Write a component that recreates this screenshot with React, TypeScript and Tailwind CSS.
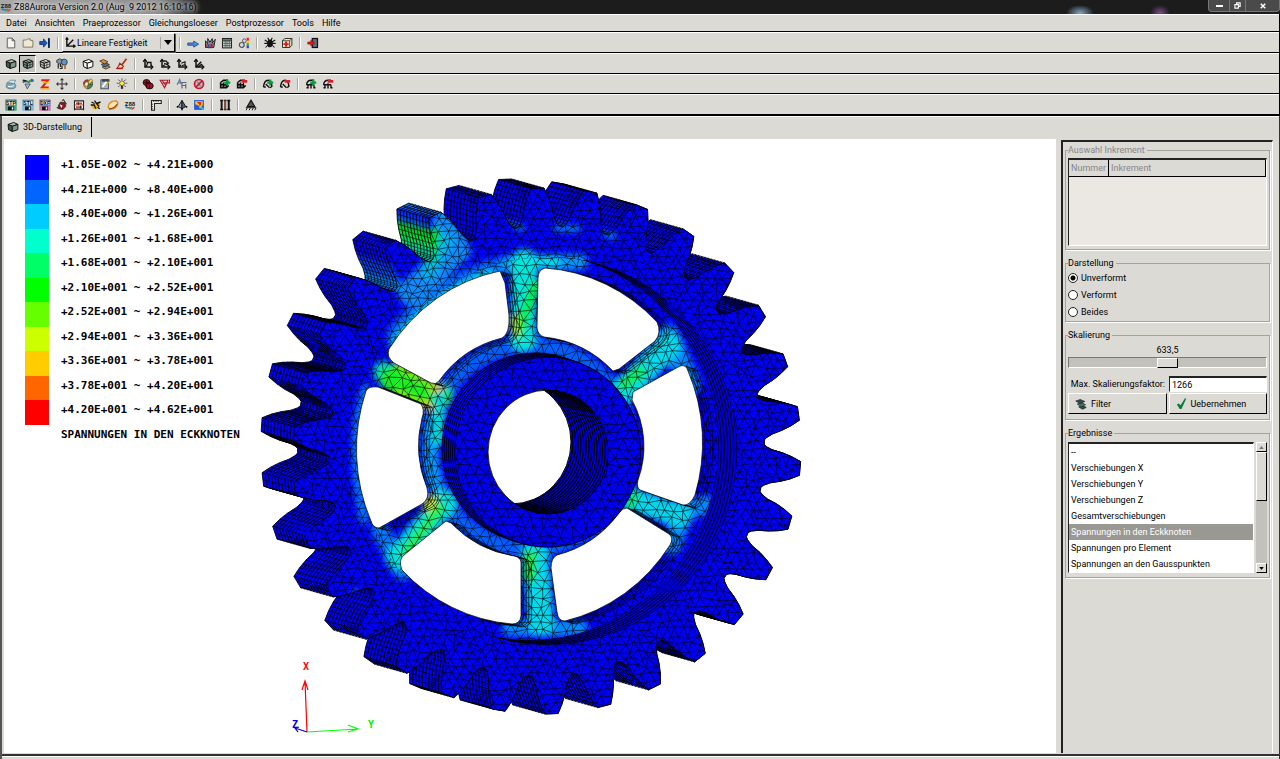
import React, { useState } from 'react';

const RESULTS = [
  '--',
  'Verschiebungen X',
  'Verschiebungen Y',
  'Verschiebungen Z',
  'Gesamtverschiebungen',
  'Spannungen in den Eckknoten',
  'Spannungen pro Element',
  'Spannungen an den Gausspunkten',
];

const LEGEND = [
  { color: '#0000ff', range: '+1.05E-002 ~ +4.21E+000' },
  { color: '#0066ff', range: '+4.21E+000 ~ +8.40E+000' },
  { color: '#00ccff', range: '+8.40E+000 ~ +1.26E+001' },
  { color: '#00ffcc', range: '+1.26E+001 ~ +1.68E+001' },
  { color: '#00ff66', range: '+1.68E+001 ~ +2.10E+001' },
  { color: '#00ff00', range: '+2.10E+001 ~ +2.52E+001' },
  { color: '#66ff00', range: '+2.52E+001 ~ +2.94E+001' },
  { color: '#ccff00', range: '+2.94E+001 ~ +3.36E+001' },
  { color: '#ffcc00', range: '+3.36E+001 ~ +3.78E+001' },
  { color: '#ff6600', range: '+3.78E+001 ~ +4.20E+001' },
  { color: '#ff0000', range: '+4.20E+001 ~ +4.62E+001' },
];

/* ---------- gear geometry ---------- */

const CX = 547;
const CY = 451;
const TEETH = 30;
const PROFILE: [number, number][] = [
  [-5.4, 0.856],
  [-4.8, 0.866],
  [-4, 0.89],
  [-3.3, 0.93],
  [-2.5, 0.965],
  [-1.5, 1],
  [1.5, 1],
  [2.5, 0.965],
  [3.3, 0.93],
  [4, 0.89],
  [4.8, 0.866],
  [5.4, 0.856],
];

const gearPoints: [number, number][] = [];
for (let i = 0; i < TEETH; i++) {
  for (const [offset, r] of PROFILE) {
    const a = ((3.8 + i * 12 + offset) * Math.PI) / 180;
    const dy = Math.sin(a) * 263 * r;
    // the lower half leans slightly to the left
    const lean = dy > 0 ? dy * 0.02 : 0;
    gearPoints.push([CX + Math.cos(a) * 254 * r - lean, CY + dy]);
  }
}

const GEAR_PATH = 'M' + gearPoints.map(([x, y]) => `${x.toFixed(1)} ${y.toFixed(1)}`).join('L') + 'Z';

// lines that run through the width of the teeth
const RIB_PATH = gearPoints
  .map(([x, y], i) => {
    const [nx, ny] = gearPoints[(i + 1) % gearPoints.length];
    const mx = (x + nx) / 2;
    const my = (y + ny) / 2;
    return `M${x.toFixed(1)} ${y.toFixed(1)}l-32 -9M${mx.toFixed(1)} ${my.toFixed(1)}l-32 -9`;
  })
  .join('');

const noise = (i: number, j: number) => {
  const v = Math.sin(i * 127.1 + j * 311.7) * 43758.5453;
  return v - Math.floor(v) - 0.5;
};

const buildMesh = (x0: number, y0: number, x1: number, y1: number, size: number) => {
  const rowHeight = size * 0.87;
  const point = (i: number, j: number) => {
    const x = x0 + i * size + (j % 2 ? size / 2 : 0) + noise(i, j) * size * 0.55;
    const y = y0 + j * rowHeight + noise(j + 57, i + 13) * size * 0.5;
    return `${x.toFixed(1)} ${y.toFixed(1)}`;
  };
  let d = '';
  const cols = Math.ceil((x1 - x0) / size);
  const rows = Math.ceil((y1 - y0) / rowHeight);
  for (let j = 0; j < rows; j++) {
    for (let i = 0; i < cols; i++) {
      const shift = j % 2 ? 1 : 0;
      d += `M${point(i + 1, j)}L${point(i, j)}L${point(i + shift, j + 1)}`;
      d += `M${point(i, j)}L${point(i + shift - 1, j + 1)}`;
    }
  }
  return d;
};

const RIM_MESH = buildMesh(280, 180, 810, 720, 8.6);
const WEB_MESH = buildMesh(340, 240, 740, 650, 10);

const WINDOWS = [
  'M500 271L505 283L509 315Q510 334 502 338Q462 348 439 381Q436 385 431 383L394 363Q386 357 389 349A172 178 0 0 1 500 271Z',
  'M545 268Q538 270 538 278L537 328Q538 335 544 337A111 111 0 0 1 613 371L619 369L655 341Q662 333 657 322A172 178 0 0 0 545 268Z',
  'M633 392L680 366Q686 364 688 371A172 178 0 0 1 695 495Q690 506 683 505L640 490Q636 487 638 480A93 95 0 0 0 632 400Z',
  'M627 508L669 534Q674 538 670 545A172 178 0 0 1 565 621Q558 621 557 612L551 568Q551 558 557 555A111 111 0 0 0 619 513Q622 508 627 508Z',
  'M446 521L404 555Q398 560 402 570A172 178 0 0 0 512 624Q520 624 521 616L521 562Q520 557 514 556A111 111 0 0 1 451 523Z',
  'M366 391Q368 386 378 387L421 404Q425 410 422 418A111 111 0 0 0 427 488Q430 499 422 504L379 528Q373 528 371 521A172 178 0 0 1 366 391Z',
];

const steps = (n: number) => Array.from({ length: n }, (_, i) => i);

const StressField: React.FC = () => (
  <g>
    <rect x="200" y="100" width="700" height="700" fill="#0000f6" />
    <g filter="url(#soft)" fill="none" strokeLinecap="round">
      {/* rim next to the loaded tooth */}
      <path d="M400 335Q432 295 492 272" stroke="#0066ff" strokeWidth="26" />
      <path d="M446 222L456 250L412 292" stroke="#0a8cff" strokeWidth="28" />
      <path d="M394 345Q428 298 490 274" stroke="#00d8e8" strokeWidth="9" />
      <path d="M446 240L428 272" stroke="#00bbee" strokeWidth="14" />
      <path d="M434 233L430 256" stroke="#00e010" strokeWidth="12" />
      <path d="M386 268L398 288" stroke="#00a0ee" strokeWidth="8" />
      <path d="M355 592L362 600M556 228L578 229M606 234L614 236M516 226L522 228" stroke="#0090f0" strokeWidth="6" />
      {/* left edge of the rim */}
      <path d="M366 388Q348 440 364 520" stroke="#0080ff" strokeWidth="9" />
      {/* ring around the hub */}
      <ellipse cx="529" cy="447" rx="100" ry="102" stroke="#0060ff" strokeWidth="18" />
      <path d="M436 390Q424 445 438 500" stroke="#00a0ff" strokeWidth="14" />
      {/* spokes */}
      <path d="M505 264L580 262" stroke="#0098ff" strokeWidth="16" />
      <path d="M524 262L523 338" stroke="#00e6dd" strokeWidth="26" />
      <path d="M525 258L556 262" stroke="#00e8ee" strokeWidth="9" />
      <path d="M536 285L518 332" stroke="#00f050" strokeWidth="11" />
      <path d="M514 318L516 332" stroke="#b0f000" strokeWidth="8" />
      <path d="M668 335L690 385" stroke="#0088ff" strokeWidth="22" />
      <path d="M668 345L625 390" stroke="#00dcf0" strokeWidth="27" />
      <path d="M640 372L624 384" stroke="#10f060" strokeWidth="13" />
      <path d="M684 508L672 545M684 510L705 505" stroke="#0088ff" strokeWidth="20" />
      <path d="M680 516L634 500" stroke="#00d8f0" strokeWidth="24" />
      <path d="M634 494L629 506" stroke="#00ee70" strokeWidth="10" />
      <path d="M510 628L580 628" stroke="#0088ff" strokeWidth="17" />
      <path d="M535 555L541 622" stroke="#00dcee" strokeWidth="27" />
      <path d="M530 556L529 576" stroke="#20ee30" strokeWidth="13" />
      <path d="M380 530L403 572" stroke="#0078ff" strokeWidth="18" />
      <path d="M398 558L445 502" stroke="#00e2e0" strokeWidth="25" />
      <path d="M440 508L406 552" stroke="#20f040" strokeWidth="10" />
      <path d="M432 500L428 506" stroke="#d0f000" strokeWidth="11" />
      <path d="M384 372L394 380" stroke="#00e0c0" strokeWidth="22" />
      <path d="M392 379L440 396" stroke="#18f020" strokeWidth="25" />
      <path d="M440 388L438 440" stroke="#00d8d8" strokeWidth="13" />
      <path d="M398 364L436 386M396 394L426 406" stroke="#88f000" strokeWidth="7" />
      <path d="M434 390L440 388M426 404L430 408" stroke="#f0b000" strokeWidth="6" />
    </g>
  </g>
);

const GearModel: React.FC = () => (
  <svg
    className="absolute inset-0 h-full w-full"
    viewBox="4 139 1052 614"
    preserveAspectRatio="xMinYMin meet"
    role="img"
    aria-label="Zahnrad"
  >
    <defs>
      <filter id="soft" x="-10%" y="-10%" width="120%" height="120%">
        <feGaussianBlur stdDeviation="3" />
      </filter>
      <pattern id="stress" patternUnits="userSpaceOnUse" x="200" y="100" width="700" height="700" viewBox="200 100 700 700">
        <StressField />
      </pattern>
      <clipPath id="gear"><path d={GEAR_PATH} /></clipPath>
      <clipPath id="recess"><ellipse cx="548" cy="451" rx="189" ry="194" /></clipPath>
      <clipPath id="web"><ellipse cx="529" cy="446" rx="189" ry="194" /></clipPath>
      <clipPath id="hub"><ellipse cx="548" cy="452" rx="93" ry="95" /></clipPath>
      <clipPath id="bore"><ellipse cx="548" cy="452" rx="60" ry="62" /></clipPath>
    </defs>

    {steps(11).map(k => (
      <path
        key={k}
        d={GEAR_PATH}
        transform={`translate(${-32 + k * 3.2} ${-9 + k * 0.9})`}
        fill="url(#stress)"
        stroke="#000"
        strokeWidth="0.9"
      />
    ))}
    <path d={RIB_PATH} stroke="#000" strokeWidth="0.6" />
    <path d={GEAR_PATH} fill="url(#stress)" stroke="#000" strokeWidth="0.8" />
    <g clipPath="url(#gear)">
      <path d={RIM_MESH} fill="none" stroke="#000" strokeWidth="0.6" />
    </g>

    <g clipPath="url(#recess)">
      <ellipse cx="548" cy="451" rx="189" ry="194" fill="#0000d0" />
      {steps(7).map(k => (
        <ellipse key={k} cx={548 - k * 3.1} cy={451 - k * 0.8} rx="189" ry="194" fill="none" stroke="#000" strokeWidth="0.9" />
      ))}
      <g clipPath="url(#web)">
        <rect x="330" y="240" width="420" height="420" fill="url(#stress)" />
        <path d={WEB_MESH} fill="none" stroke="#000" strokeWidth="0.6" />
      </g>
    </g>

    <g fill="none" stroke="#000" strokeWidth="0.7">
      {WINDOWS.map(d =>
        steps(4).map(k => <path key={d + k} d={d} transform={`translate(${(k + 1) * 2.6} ${(k + 1) * 0.7})`} />)
      )}
    </g>
    {WINDOWS.map(d => (
      <path key={d} d={d} fill="#fff" stroke="#000" strokeWidth="0.7" />
    ))}

    {steps(7).map(k => (
      <ellipse key={k} cx={535 + k * 2.1} cy={448 + k * 0.7} rx="93" ry="95" fill="#0000f0" stroke="#000" strokeWidth="0.9" />
    ))}
    <g clipPath="url(#hub)">
      <path d={WEB_MESH} fill="none" stroke="#000" strokeWidth="0.6" />
    </g>
    <g clipPath="url(#bore)">
      <rect x="480" y="380" width="140" height="140" fill="#0000cc" />
      {steps(14).map(k => (
        <ellipse key={k} cx={548 - k * 2.7} cy={452 - k * 0.75} rx="60" ry="62" fill="none" stroke="#000" strokeWidth="1.1" />
      ))}
      <ellipse cx="511" cy="442" rx="60" ry="62" fill="#fff" stroke="#000" />
    </g>
    <ellipse cx="548" cy="452" rx="60" ry="62" fill="none" stroke="#000" strokeWidth="0.8" />

    {/* coordinate axes */}
    <g fill="none" strokeWidth="1.2">
      <path d="M307 732L305 681M302 690L305 681L308 690" stroke="#f00" />
      <path d="M307 732L358 729M348 725L358 729L348 732" stroke="#0f0" />
      <path d="M307 732L295 728M299 727L295 728L298 732" stroke="#00d" />
    </g>
    <g className="font-['DejaVu_Sans_Mono',monospace] text-[10px] font-bold">
      <text x="303" y="670" fill="#f00">X</text>
      <text x="368" y="728" fill="#0e0">Y</text>
      <text x="292" y="728" fill="#00d">Z</text>
    </g>
  </svg>
);

/* ---------- icons, all on a 16 unit grid ---------- */

const Cube: React.FC<{ top: string; left: string; right: string; mesh?: boolean }> = ({ top, left, right, mesh }) => (
  <g stroke="#111" strokeWidth="1.3" strokeLinejoin="round">
    <path d="M1.5 4.5L9 2L14.5 4.5L7 7Z" fill={top} />
    <path d="M1.5 4.5L7 7V14L2 11.5Z" fill={left} />
    <path d="M7 7L14.5 4.5V11.5L7 14Z" fill={right} />
    {mesh && <path d="M2 8L7 10.5L14 8M10.5 5.5V13M5 3.500L11 6" strokeWidth="0.8" fill="none" />}
  </g>
);

const Axes: React.FC<{ variant: number }> = ({ variant }) => (
  <g fill="none" stroke="#111" strokeWidth="2">
    <path d="M4 2V12H14" />
    <path d="M1.5 5L4 2L6.5 5M11.5 9L14.5 12L11.5 15" strokeWidth="1.6" />
    {variant === 0 && <path d="M7 9V6H12V10M4 12L7 9" strokeWidth="1.7" />}
    {variant === 1 && <path d="M6 4Q12 3 11 9M7 7L11 9L13 6M5 11L8 9" strokeWidth="1.7" />}
    {variant === 2 && <path d="M7 7L12 5V9L8 10M5 11L7 9" strokeWidth="1.5" />}
    {variant === 3 && <path d="M4 12L11 5M7 12L12 8" />}
  </g>
);

const FileBadge: React.FC<{ label: string; color: string }> = ({ label, color }) => (
  <g>
    <rect x="1" y="1" width="14" height="14" fill={color} stroke={color} />
    <rect x="1.500" y="2" width="13" height="7" fill="#e8f2ee" stroke="#234" strokeWidth="0.600" />
    <rect x="4" y="10" width="8" height="5" fill="#111" />
    <rect x="9" y="11" width="2" height="3" fill="#fff" />
    <text x="8" y="8" fontSize="7" fontWeight="bold" textAnchor="middle" fill="#012">{label}</text>
  </g>
);

const Nodes: React.FC<{ sign: '+' | '-'; kind: number }> = ({ sign, kind }) => (
  <g fill="none" stroke="#111" strokeWidth="1.8">
    {kind === 0 && <path d="M2 6L6 3H12M2 6V13H10L13 10M2 9H10M6 6V13M10 6V13" fill="#777" />}
    {kind === 1 && <path d="M2 12Q3 3 8 3T13 12M2 12H5M5 8L10 13M11 13L14 10" />}
    {kind === 2 && <path d="M2 9Q3 3 8 3H12M2 9H12M4 9V14M8 7V14M12 9V14M2 13H5M7 13H9M11 13H14" />}
    {sign === '+'
      ? <path d="M11 2V10M7 6H15" stroke="#0a9a3c" strokeWidth="3" />
      : <path d="M7.5 4.5H15" stroke="#d8202a" strokeWidth="3.6" />}
  </g>
);

const LayersIcon: React.FC<{ a: string; b: string }> = ({ a, b }) => (
  <g stroke="#222" strokeWidth="0.9">
    <path d="M5 12L10 10L15 12.5L10 15Z" fill={b} />
    <path d="M3 8L9 6L14 9L8 12Z" fill={a} />
    <path d="M1 4L7 2L13 4.5L7 7.5Z" fill={b} />
  </g>
);

const ICONS: Record<string, React.ReactNode> = {
  'Neu': <path d="M3 1.5H9.5L13 5V14.5H3ZM9.5 1.5V5H13" fill="#f6f4ec" stroke="#555" strokeWidth="1.2" />,
  'Oeffnen': <path d="M1.5 13.5V4H6L7.5 2.5H11V4.5H14.5V13.5Z" fill="#efe9d2" stroke="#777260" strokeWidth="1.2" />,
  'Import': (
    <g>
      <path d="M1 6H6V2.5L11 8L6 13.5V10H1Z" fill="#1b55b8" stroke="#0b2a6b" />
      <rect x="12" y="1.5" width="2.5" height="13" fill="#0b1f5a" />
    </g>
  ),
  'Rechnen': <path d="M1 8H9V5.5L15.5 9.5L9 13.5V11H1Z" fill="#4f8fd8" stroke="#163a78" />,
  'Vernetzung': (
    <g>
      <path d="M2 14V5L5 9V2L8 7L11 2V8L15 3L13 14Z" fill="#8d98ac" stroke="#222" strokeWidth="1.3" />
      <path d="M4 14V9M8 15V9M12 14V8" stroke="#b22" strokeWidth="1.6" />
      <path d="M6 15V10M10 15V9" stroke="#24a" strokeWidth="1.6" />
    </g>
  ),
  'Tabelle': (
    <g>
      <rect x="2" y="2" width="12" height="12.5" fill="#d9e4dc" stroke="#222" strokeWidth="1.4" />
      <path d="M2 4.5H14" stroke="#455" strokeWidth="3" />
      <path d="M2 8.5H14M2 11.5H14M5.5 5V14M8 5V14M11 5V14" stroke="#444" />
    </g>
  ),
  'Darstellung': (
    <g>
      <circle cx="5" cy="10.5" r="3.2" fill="#ddd" stroke="#555" strokeWidth="1.6" />
      <circle cx="8.5" cy="5" r="2.5" fill="#cde" stroke="#557" strokeWidth="1.3" />
      <path d="M13 1V5" stroke="#e22" strokeWidth="3" />
      <path d="M13 5V8" stroke="#fc0" strokeWidth="3" />
      <path d="M13 8V11" stroke="#2b4" strokeWidth="3" />
      <path d="M13 11V15" stroke="#24e" strokeWidth="3" />
    </g>
  ),
  'Spider': (
    <g stroke="#111" strokeWidth="1.4" fill="#111">
      <ellipse cx="8" cy="8.5" rx="3" ry="4.5" />
      <path d="M1 4L6 7M15 4L10 7M0.5 8.5H15.5M2 14L6 10M14 14L10 10M5 1L7 5M11 1L9 5" fill="none" />
    </g>
  ),
  'Hilfe': (
    <g>
      <path d="M2 5L5 2H14.5V11L11.5 14H2Z" fill="#efe3c0" stroke="#222" strokeWidth="1.2" />
      <path d="M2 5H11.5V14M11.5 5L14.5 2" fill="none" stroke="#222" />
      <path d="M6.7 6V13M3.2 9.5H10.2" stroke="#e01818" strokeWidth="2.6" />
    </g>
  ),
  'Beenden': (
    <g>
      <rect x="7" y="2" width="7" height="12" fill="#667" stroke="#111" strokeWidth="1.6" />
      <path d="M1 6.5H5V4L10 8L5 12V9.5H1Z" fill="#d81818" stroke="#700" strokeWidth="0.6" />
    </g>
  ),
  'Schattiert': <Cube top="#a9bfb7" left="#3f5a52" right="#7d978d" />,
  'Flaechennetz': <Cube top="#9fb5ad" left="#65857a" right="#8fa99f" mesh />,
  'Netz': <Cube top="#f2f2ee" left="#b4b4b0" right="#dcdcd8" mesh />,
  'Volumen': <Cube top="#fff" left="#f2f2f2" right="#fff" />,
  'Randbedingungen': (
    <g stroke="#222">
      <path d="M1 3L5 1L9 3V7L5 8L1 6Z" fill="#8a94a4" />
      <circle cx="11" cy="5.5" r="4" fill="#5f94c8" />
      <path d="M3 8V14M6 8V12M8 10V14H5" strokeWidth="1.6" fill="none" />
      <path d="M12 9V14.5" stroke="#b0703a" strokeWidth="2.4" />
    </g>
  ),
  'Ebenen': (
    <g stroke="#222" strokeWidth="0.9">
      <path d="M4 12L10 9.500L15 12L9 15Z" fill="#e08a2a" />
      <path d="M3 8.500L9 6L14 9L8 12Z" fill="#466f92" />
      <path d="M1 4L6 2L12 5L7 8Z" fill="#e08a2a" />
    </g>
  ),
  'Pinsel': (
    <g>
      <path d="M14 1L8 9" stroke="#b03a20" strokeWidth="2.6" />
      <path d="M5 7L10 11L8 13.500L1 14Q4 11 5 7Z" fill="#eadca6" stroke="#a02010" strokeWidth="1.4" />
      <path d="M1 14H9" stroke="#b01818" strokeWidth="1.8" />
    </g>
  ),
  'Achsen 1': <Axes variant={0} />,
  'Achsen 2': <Axes variant={1} />,
  'Achsen 3': <Axes variant={2} />,
  'Achsen 4': <Axes variant={3} />,
  'Ansicht': (
    <g stroke="#446a74" strokeWidth="0.8">
      <ellipse cx="8" cy="10.5" rx="6.5" ry="4" fill="#7fa9b4" />
      <path d="M2 7Q7 1 14 3L12 8Q7 5 2 7Z" fill="#d3e6ea" />
      <path d="M4 11Q8 13 12 10" fill="none" stroke="#fff" strokeWidth="1.3" />
    </g>
  ),
  'Rotation': (
    <g>
      <path d="M1 6Q5 3 10 6" fill="none" stroke="#3a6f86" strokeWidth="2.6" />
      <path d="M1 3L6 4" stroke="#222" strokeWidth="1.8" />
      <path d="M8 4L13 1V5L9 7Z" fill="#4a9a4a" />
      <path d="M12 1L15.500 2V5L12 5Z" fill="#2c5cc0" />
      <path d="M4 8L11 8L7 14.5Z" fill="#9ac1cc" stroke="#345" />
    </g>
  ),
  'Zoom': (
    <g>
      <path d="M3 3H12L4 12.5H13" fill="none" stroke="#e02020" strokeWidth="2.6" />
      <path d="M3 14.5H14M5 6H13" stroke="#f0b400" strokeWidth="1.8" />
    </g>
  ),
  'Verschieben': (
    <path d="M8 1V15M1 8H15M6 3L8 1L10 3M6 13L8 15L10 13M3 6L1 8L3 10M13 6L15 8L13 10" fill="none" stroke="#333" strokeWidth="1.4" />
  ),
  'Farben': (
    <g stroke="#333" strokeWidth="0.6">
      <circle cx="8" cy="8.500" r="6" fill="#e2a33c" />
      <path d="M2 8Q2 2 8 2.5L8 8Z" fill="#d03a2a" />
      <path d="M8 9L14 8Q13 14 7 14.5Z" fill="#3b8f46" />
      <path d="M4 6L8 5V10L4 11Z" fill="#fff" />
      <path d="M8 7L11 1L14.500 3L11 8Z" fill="#f0dc50" />
      <path d="M10 8L14 5V9Z" fill="#5a8fd0" />
    </g>
  ),
  'Protokoll': (
    <g>
      <rect x="2.5" y="2.5" width="10" height="12" fill="#9db6cc" stroke="#333" />
      <path d="M4 1.5H14V5H4Z" fill="#3b4a54" />
      <path d="M4.500 12L10 5" stroke="#fff" strokeWidth="2.400" />
      <path d="M13.5 5L10 9" stroke="#e0a020" strokeWidth="1.6" />
    </g>
  ),
  'Licht': (
    <g>
      <circle cx="8" cy="7" r="3.2" fill="#ffe94a" stroke="#444" />
      <rect x="6.5" y="10.5" width="3" height="4" fill="#333" />
      <path d="M8 0.5V2.5M1 7H3.5M12.5 7H15M3 2L5 4M13 2L11 4M3 12L5 10M13 12L11 10" stroke="#444" strokeWidth="1.2" />
    </g>
  ),
  'Knoten': (
    <g fill="#9a1024" stroke="#1a0508" strokeWidth="1.2">
      <ellipse cx="6" cy="6" rx="4.5" ry="4" />
      <ellipse cx="10" cy="10.5" rx="5" ry="4" />
      <path d="M3 6H12M6 3V12M10 6V14" fill="none" strokeWidth="0.9" />
    </g>
  ),
  'Elemente': <path d="M1.5 3H12L7.5 13ZM5 6.5H14V2M4 3L9 10" fill="none" stroke="#b0182a" strokeWidth="1.4" />,
  'Beschriftung': (
    <g fill="none" stroke="#5f6670" strokeWidth="1.6">
      <path d="M1.5 9L5 2L7 8M3 6.5H7" stroke="#5a7aa8" />
      <path d="M7 6H14M8 14V6M8 10H12M13 8V14" />
    </g>
  ),
  'Ausblenden': (
    <g fill="none">
      <circle cx="8" cy="8" r="6" fill="#b9b4c0" stroke="#c8182c" strokeWidth="2.2" />
      <path d="M6 5L10 11" stroke="#445" />
      <path d="M4 12L12 4" stroke="#c8182c" strokeWidth="2.2" />
    </g>
  ),
  'Knoten hinzufuegen': <Nodes sign="+" kind={0} />,
  'Knoten entfernen': <Nodes sign="-" kind={0} />,
  'Flaeche hinzufuegen': <Nodes sign="+" kind={1} />,
  'Flaeche entfernen': <Nodes sign="-" kind={1} />,
  'Element hinzufuegen': <Nodes sign="+" kind={2} />,
  'Element entfernen': <Nodes sign="-" kind={2} />,
  'STEP': <FileBadge label="STP" color="#4f9c84" />,
  'STL': <FileBadge label="STL" color="#7fb6dc" />,
  'DXF': <FileBadge label="DXF" color="#c477b4" />,
  'Nastran': (
    <g>
      <path d="M3 9L6 4L12 5L13 10L9 14L4 13Z" fill="#8a1820" stroke="#222" />
      <path d="M5 7L9 9L7 12Z" fill="#fff" />
      <path d="M1 11L4 13M8 2L10 1L14 7" stroke="#333" strokeWidth="1.4" fill="none" />
    </g>
  ),
  'Abaqus': (
    <g fill="none">
      <rect x="1.5" y="2" width="13" height="12" fill="#fff" />
      <path d="M2 1.5V15M14 1.5V15M1.5 2.5H14.5M1.5 13.5H14.5" stroke="#222" strokeWidth="1.5" />
      <path d="M2 8H14" stroke="#555" />
      <path d="M4 6H12M4 11H12" stroke="#e04020" strokeWidth="2.4" />
      <path d="M7 4V8M10 9V13" stroke="#222" strokeWidth="1.2" />
    </g>
  ),
  'Ansys': (
    <g>
      <ellipse cx="8" cy="9" rx="6" ry="4" fill="#f0b820" transform="rotate(-30 8 9)" />
      <path d="M5 7L8 13M8 5L12 10M2 4L6 6M1 8H5M13 13L10 11M14 4L9 6M6 2L8 5" stroke="#111" strokeWidth="1.8" />
    </g>
  ),
  'Cosmos': (
    <g fill="none">
      <ellipse cx="8" cy="8" rx="7" ry="4.5" fill="#f8e4b0" stroke="#e08a1a" strokeWidth="2" transform="rotate(-35 8 8)" />
      <path d="M3 13.500Q9 13 13.500 7" stroke="#7a2c10" strokeWidth="1.4" />
    </g>
  ),
  'Z88': (
    <g>
      <text x="8" y="9" fontSize="8" fontWeight="bold" textAnchor="middle" fill="#222">Z88</text>
      <path d="M2 10Q5 13 8 11" stroke="#1a7fd0" strokeWidth="2" fill="none" />
      <path d="M7 13L11 11" stroke="#2a4" strokeWidth="2" />
      <path d="M10 14L14 11" stroke="#e33" strokeWidth="2" />
    </g>
  ),
  'Lineal': (
    <g>
      <path d="M2 2H15V6H6V15H2Z" fill="#ecead8" stroke="#222" strokeWidth="1.4" />
      <path d="M5 2V4M8 2V4M11 2V4M2 7H4M2 10H4M2 13H4" stroke="#222" />
    </g>
  ),
  'Tetraeder': (
    <g stroke="#111" strokeWidth="1.3">
      <path d="M8 2L3 10L8 13Z" fill="#8ea6bd" />
      <path d="M8 2L13 10L8 13Z" fill="#4f6a85" />
      <path d="M1 11L3 10M13 10L15 11M8 13V15" strokeWidth="2" />
    </g>
  ),
  'Spannung': (
    <g>
      <rect x="1.5" y="1.5" width="13" height="13" fill="#2a56d8" />
      <path d="M3 3H13V8L9 13L8 9L3 7Z" fill="#f2d020" />
      <path d="M5 4H11V7L9 10L8 7Z" fill="#e02a1a" />
      <path d="M10 11L14 14" stroke="#3bd8e0" strokeWidth="2" />
    </g>
  ),
  'Schrauben': (
    <g stroke="#111" strokeWidth="1.2">
      <path d="M1.5 2H5.5M1.5 14H5.5M6.5 2H10M6.5 14H10M11 2H15M11 14H15" strokeWidth="2" />
      <path d="M3.5 2V14M13 2V14" strokeWidth="2.6" />
      <path d="M8.2 2V14" stroke="#7a4a3c" strokeWidth="2.8" />
    </g>
  ),
  'Lager': (
    <g>
      <path d="M8 1.5L13 10H3Z" fill="#555" stroke="#111" strokeWidth="1.4" />
      <path d="M1 11.5H15M3 12L1.5 15M7 12L5.5 15M11 12L9.5 15M14.5 12L13 15" stroke="#111" strokeWidth="1.2" />
    </g>
  ),
};

const TOOLBARS: string[][][] = [
  [
    ['Schattiert', 'Flaechennetz', 'Netz', 'Randbedingungen'],
    ['Volumen', 'Ebenen', 'Pinsel'],
    ['Achsen 1', 'Achsen 2', 'Achsen 3', 'Achsen 4'],
  ],
  [
    ['Ansicht', 'Rotation', 'Zoom', 'Verschieben'],
    ['Farben', 'Protokoll', 'Licht'],
    ['Knoten', 'Elemente', 'Beschriftung', 'Ausblenden'],
    ['Knoten hinzufuegen', 'Knoten entfernen'],
    ['Flaeche hinzufuegen', 'Flaeche entfernen'],
    ['Element hinzufuegen', 'Element entfernen'],
  ],
  [
    ['STEP', 'STL', 'DXF', 'Nastran', 'Abaqus', 'Ansys', 'Cosmos', 'Z88'],
    ['Lineal'],
    ['Tetraeder', 'Spannung'],
    ['Schrauben'],
    ['Lager'],
  ],
];

const ToolButton: React.FC<{ name: string; pressed?: boolean; onClick?: () => void }> = ({ name, pressed, onClick }) => (
  <button
    type="button"
    aria-label={name}
    aria-pressed={pressed}
    onClick={onClick}
    className={
      pressed
        ? 'flex h-[18px] w-[17px] shrink-0 items-center justify-center border border-r-white border-b-white border-t-black border-l-black bg-[#c4c2bd]'
        : 'flex h-[18px] w-[17px] shrink-0 items-center justify-center'
    }
  >
    <svg viewBox="0 0 16 16" className="h-3 w-3 shrink-0">{ICONS[name]}</svg>
  </button>
);

const Separator = () => (
  <span className="flex w-[9px] shrink-0 justify-center">
    <span className="h-3 w-[2px] border-l border-r border-l-[#a9a7a2] border-r-white" />
  </span>
);

const ToolGroups: React.FC<{ groups: string[][]; active?: string; onSelect?: (name: string) => void }> = ({
  groups,
  active,
  onSelect,
}) => (
  <>
    {groups.map((group, i) => (
      <React.Fragment key={group[0]}>
        {i > 0 && <Separator />}
        {group.map(name => (
          <ToolButton key={name} name={name} pressed={name === active} onClick={() => onSelect?.(name)} />
        ))}
      </React.Fragment>
    ))}
  </>
);

const ROW = 'flex items-center border-t border-b border-t-white border-b-black pl-0.5';

const GROUP = 'rounded-none border border-[#a5a39e] shadow-[1px_1px_0_#fff] px-0.5';

const App: React.FC = () => {
  const [view, setView] = useState('Flaechennetz');
  const [mode, setMode] = useState('Unverformt');
  const [scale, setScale] = useState(633.5);
  const [maxScale, setMaxScale] = useState('1266');
  const [result, setResult] = useState(RESULTS[5]);

  return (
    <div className="flex min-h-screen flex-col bg-[#dcdad5] font-['Roboto','Liberation_Sans',sans-serif] text-[9px] leading-3 text-black">
      <header className="flex h-[14px] items-center overflow-hidden bg-[#1c1c1c] bg-[radial-gradient(ellipse_14px_8px_at_1080px_13px,#7fa6c4,transparent),radial-gradient(ellipse_10px_8px_at_1160px_13px,#7a4d8c,transparent),linear-gradient(90deg,#a8a8a8_0,#8a8a8a_160px,#1c1c1c_200px)]">
        <svg viewBox="0 0 16 16" className="h-3 w-3 shrink-0">{ICONS['Z88']}</svg>
        <h1 className="ml-0.5 flex-1 whitespace-pre text-black [text-shadow:0_0_4px_#fff,0_0_6px_#fff]">
          Z88Aurora Version 2.0 (Aug  9 2012 16:10:16)
        </h1>
        <div className="flex h-3 self-start rounded-b-sm border border-t-0 border-[#777] bg-[#4a4a4a] text-white">
          <button type="button" aria-label="Minimieren" className="flex w-5 items-center justify-center">
            <span className="h-[2px] w-[7px] bg-white" />
          </button>
          <button type="button" aria-label="Wiederherstellen" className="flex w-4 items-center justify-center border-l border-[#777]">
            <svg viewBox="0 0 8 8" className="h-[7px] w-[7px]" fill="none" stroke="#fff" strokeWidth="1.3">
              <path d="M1 3H5V7H1ZM3 3V1H7V5H5" />
            </svg>
          </button>
          <button type="button" aria-label="Schliessen" className="flex w-[34px] items-center justify-center border-l border-[#777]">
            <svg viewBox="0 0 8 8" className="h-[6px] w-[6px]" stroke="#fff" strokeWidth="2">
              <path d="M1 1L7 7M7 1L1 7" />
            </svg>
          </button>
        </div>
      </header>

      <div className="border-r border-r-black">
        <nav className="flex h-[18px] items-center gap-2 border-t border-b border-t-white border-b-black pl-1.5">
          {['Datei', 'Ansichten', 'Praeprozessor', 'Gleichungsloeser', 'Postprozessor', 'Tools', 'Hilfe'].map(item => (
            <button key={item} type="button">{item}</button>
          ))}
        </nav>
        <div className={`${ROW} h-[21px]`}>
          <ToolGroups groups={[['Neu', 'Oeffnen', 'Import']]} />
          <Separator />
          <div className="relative flex h-[19px] w-[113px] items-center border border-t-white border-r-black border-b-black border-l-white shadow-[1px_1px_0_#555]">
            <svg viewBox="0 0 12 12" className="ml-0.5 h-[11px] w-[11px] shrink-0" fill="none" stroke="#111" strokeWidth="1.5">
              <path d="M2 1V10H11M2 10L9 3M1 3L2 1L3.5 3M9 8.5L11 10L9 11.5" />
            </svg>
            <select aria-label="Berechnungsart" className="h-full min-w-0 flex-1 appearance-none bg-transparent pl-px">
              <option>Lineare Festigkeit</option>
            </select>
            <span className="pointer-events-none mr-0.5 flex h-3 items-center border-l border-[#a9a7a2] pl-[3px]">
              <svg viewBox="0 0 8 5" className="h-[5px] w-2"><path d="M0 0H8L4 5Z" /></svg>
            </span>
          </div>
          <Separator />
          <ToolGroups
            groups={[['Rechnen', 'Vernetzung', 'Tabelle', 'Darstellung'], ['Spider', 'Hilfe'], ['Beenden']]}
          />
        </div>
        <div className={`${ROW} h-[21px]`}>
          <ToolGroups groups={TOOLBARS[0]} active={view} onSelect={setView} />
        </div>
        <div className={`${ROW} h-5`}>
          <ToolGroups groups={TOOLBARS[1]} />
        </div>
        <div className={`${ROW} h-[22px] border-b-2 border-b-[#3a3a3a]`}>
          <ToolGroups groups={TOOLBARS[2]} />
        </div>
      </div>

      <div className="flex flex-1 flex-col border-r border-l-2 border-r-[#333] border-l-[#55534f]">
        <div className="flex h-[23px] items-start border-t border-t-white">
          <button type="button" className="flex h-[20px] w-[90px] items-center gap-1 border-r border-black pl-[5px]">
            <svg viewBox="0 0 16 16" className="h-3 w-3">{ICONS['Schattiert']}</svg>
            3D-Darstellung
          </button>
        </div>

        <div className="flex flex-1">
          <main className="relative ml-0.5 flex-1 bg-white">
            <GearModel />
            <div className="relative flex gap-3 pt-[14px] pl-[21px]">
              <div className="mt-0.5 flex h-[270px] w-6 flex-col">
                {LEGEND.map(({ color }) => (
                  <span key={color} className="flex-1" style={{ backgroundColor: color }} />
                ))}
              </div>
              <div className="flex h-[294px] flex-col whitespace-pre font-['DejaVu_Sans_Mono','Liberation_Mono',monospace] text-[11px] font-bold">
                {LEGEND.map(({ range }) => (
                  <span key={range} className="flex flex-1 items-center">{range}</span>
                ))}
                <span className="flex flex-1 items-center">SPANNUNGEN IN DEN ECKKNOTEN</span>
              </div>
            </div>
          </main>

          <aside className="mt-px mr-1.5 ml-[5px] w-[212px] border-t-2 border-r border-l-2 border-t-[#222] border-r-white border-l-[#222] pr-0.5 pl-0.5">
            <fieldset className={`${GROUP} text-[#87858a]`}>
              <legend className="bg-[#dcdad5] pr-0.5 leading-4">Auswahl Inkrement</legend>
              <div className="mb-[3px] h-[88px] border border-t-2 border-t-[#222] border-r-white border-b-white border-l-[#222] bg-[#ebe8e3]">
                <table className="w-full border-collapse bg-[#dcdad5] text-left">
                  <thead>
                    <tr className="h-4">
                      <th className="w-[38px] border-r border-b border-black px-0.5 font-normal">Nummer</th>
                      <th className="border-r border-b border-black px-0.5 font-normal">Inkrement</th>
                    </tr>
                  </thead>
                </table>
              </div>
            </fieldset>

            <fieldset className={`${GROUP} mt-[5px]`}>
              <legend className="bg-[#dcdad5] pr-0.5 leading-4">Darstellung</legend>
              <div className="flex flex-col gap-[5px] pt-px pb-[3px]">
                {['Unverformt', 'Verformt', 'Beides'].map(item => (
                  <label key={item} className="flex items-center gap-[3px]">
                    <input
                      type="radio"
                      name="mode"
                      checked={mode === item}
                      onChange={() => setMode(item)}
                      className="h-[10px] w-[10px] appearance-none rounded-full border border-[#222] bg-white checked:bg-[radial-gradient(circle,#000_0_2px,#fff_3px)]"
                    />
                    {item}
                  </label>
                ))}
              </div>
            </fieldset>

            <fieldset className={`${GROUP} mt-[5px]`}>
              <legend className="bg-[#dcdad5] pr-0.5 leading-4">Skalierung</legend>
              <label className="flex flex-col items-center pt-px">
                <span>{scale.toFixed(1).replace('.', ',')}</span>
                <input
                  type="range"
                  min={0}
                  max={1267}
                  step={0.5}
                  value={scale}
                  onChange={e => setScale(Number(e.target.value))}
                  className="mt-px h-[11px] w-full appearance-none border border-t-[#777] border-r-white border-b-white border-l-[#777] bg-[#c3c1bc] [&::-webkit-slider-thumb]:h-[10px] [&::-webkit-slider-thumb]:w-[21px] [&::-webkit-slider-thumb]:appearance-none [&::-webkit-slider-thumb]:border [&::-webkit-slider-thumb]:border-t-white [&::-webkit-slider-thumb]:border-r-black [&::-webkit-slider-thumb]:border-b-black [&::-webkit-slider-thumb]:border-l-white [&::-webkit-slider-thumb]:bg-[#dcdad5]"
                />
              </label>
              <div className="mt-2 flex items-center justify-end gap-1">
                <label htmlFor="max-scale" className="whitespace-nowrap">Max. Skalierungsfaktor:</label>
                <input
                  id="max-scale"
                  value={maxScale}
                  onChange={e => setMaxScale(e.target.value)}
                  className="h-4 w-[98px] border border-t-2 border-t-[#222] border-r-white border-b-white border-l-[#222] bg-white px-0.5"
                />
              </div>
              <div className="mt-px mb-[5px] grid grid-cols-2 gap-0.5">
                <button type="button" className="flex h-[21px] items-center gap-1 border border-t-white border-r-black border-b-black border-l-white pl-1.5">
                  <svg viewBox="0 0 16 16" className="h-3 w-3"><LayersIcon a="#2f7d55" b="#35465c" /></svg>
                  Filter
                </button>
                <button type="button" className="flex h-[21px] items-center gap-1 border border-t-white border-r-black border-b-black border-l-white pl-1.5">
                  <svg viewBox="0 0 12 12" className="h-[11px] w-[11px]"><path d="M1 7L3 6L5 8L10 0L11 1L6 12H4Z" fill="#0c7a3c" /></svg>
                  Uebernehmen
                </button>
              </div>
            </fieldset>

            <fieldset className={`${GROUP} mt-[5px]`}>
              <legend className="bg-[#dcdad5] pr-0.5 leading-4">Ergebnisse</legend>
              <div className="mb-1 flex pt-px">
                <ul role="listbox" aria-label="Ergebnisse" className="flex-1 border border-t-2 border-t-[#222] border-r-white border-b-white border-l-[#222] bg-white">
                  {RESULTS.map(item => (
                    <li
                      key={item}
                      role="option"
                      aria-selected={item === result}
                      onClick={() => setResult(item)}
                      className={
                        item === result
                          ? 'h-4 bg-[#9a9893] px-0.5 leading-4 text-white'
                          : 'h-4 px-0.5 leading-4'
                      }
                    >
                      {item}
                    </li>
                  ))}
                </ul>
                <div className="ml-0.5 flex w-[11px] flex-col bg-[#c3c1bc]">
                  <button type="button" aria-label="Nach oben" className="flex h-[10px] items-center justify-center border border-t-white border-r-black border-b-black border-l-white bg-[#dcdad5]">
                    <svg viewBox="0 0 6 4" className="h-[3px] w-[5px]"><path d="M3 0L6 4H0Z" fill="#777" /></svg>
                  </button>
                  <span className="h-[49px] border border-t-white border-r-black border-b-black border-l-white bg-[#dcdad5]" />
                  <span className="flex-1" />
                  <button type="button" aria-label="Nach unten" className="flex h-[10px] items-center justify-center border border-t-white border-r-black border-b-black border-l-white bg-[#dcdad5]">
                    <svg viewBox="0 0 6 4" className="h-[3px] w-[5px]"><path d="M0 0H6L3 4Z" /></svg>
                  </button>
                </div>
              </div>
            </fieldset>
          </aside>
        </div>
        <footer className="mt-px h-[5px] border-t-2 border-[#33322f] shadow-[inset_0_1px_0_#fff]" />
      </div>
    </div>
  );
};

export default App;
